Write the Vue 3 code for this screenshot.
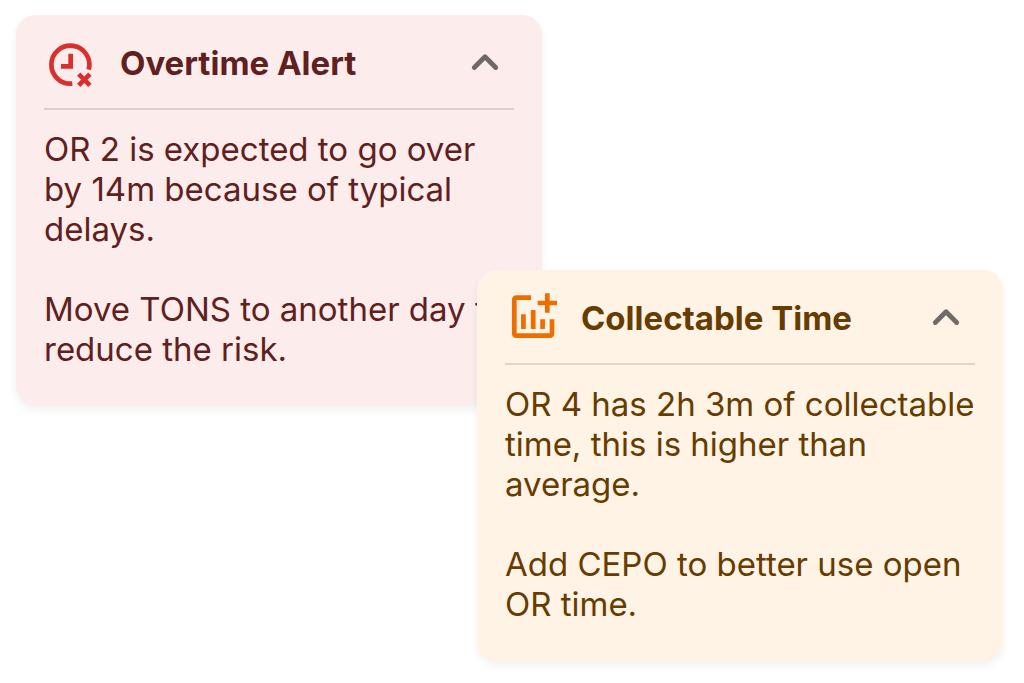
<script setup>
import { reactive } from 'vue'

const cards = reactive([
  {
    id: 'overtime',
    title: 'Overtime Alert',
    open: true,
    paragraphs: [
      'OR 2 is expected to go over by 14m because of typical delays.',
      'Move TONS to another day to reduce the risk.',
    ],
  },
  {
    id: 'collectable',
    title: 'Collectable Time',
    open: true,
    paragraphs: [
      'OR 4 has 2h 3m of collectable time, this is higher than average.',
      'Add CEPO to better use open OR time.',
    ],
  },
])

const toggle = (card) => {
  card.open = !card.open
}
</script>

<template>
  <main class="board">
    <article v-for="card in cards" :key="card.id" class="card" :class="card.id">
      <header class="card-top">
        <svg v-if="card.id === 'overtime'" class="icon" viewBox="0 0 54 54" aria-hidden="true">
          <path d="M44.7 32.7A19 19 0 1 0 28.3 46.6" class="line" />
          <path d="M24.3 16.7h4.7v15H17v-4.7h7.3z" class="solid" />
          <path d="M34.7 37.1l11.2 11.2M45.9 37.1L34.7 48.3" class="line" />
        </svg>
        <svg v-else class="icon" viewBox="0 0 54 54" aria-hidden="true">
          <path d="M26 5.6H11.3a2 2 0 0 0-2 2v34.1a2 2 0 0 0 2 2H45a2 2 0 0 0 2-2V27.3" class="line" />
          <path d="M32.7 11H52M42.3 1.2v19.5" class="line" />
          <path d="M18.4 22.3V37M28.2 18v19M37.6 27.3V37" class="line" />
        </svg>

        <h2>{{ card.title }}</h2>

        <button
          type="button"
          class="toggle"
          :aria-label="card.title"
          :aria-expanded="card.open"
          @click="toggle(card)"
        >
          <svg class="chevron" :class="{ closed: !card.open }" viewBox="0 0 32 32" aria-hidden="true">
            <path d="M5.3 19.5L16 8.8l10.7 10.7" />
          </svg>
        </button>
      </header>

      <div v-if="card.open" class="card-body">
        <p v-for="text in card.paragraphs" :key="text">{{ text }}</p>
      </div>
    </article>
  </main>
</template>

<style>
body {
  margin: 0;
  background: #ffffff;
}
</style>

<style scoped>
/* both cards share one grid cell, the second one is shifted down and right */
.board {
  display: grid;
  grid-template-columns: 1fr;
  align-items: start;
  padding: 15px 21px 22px 16px;
  font-family: Inter, 'Liberation Sans', sans-serif;
}

.card {
  grid-area: 1 / 1;
  box-sizing: border-box;
  width: 53.3%;
  padding: 22px 28px 37px;
  border-radius: 20px;
  box-shadow: 0 4px 8px rgba(0, 0, 0, 0.06);
}

.overtime {
  background: #fdecec;
  color: #5f2120;
}

.collectable {
  justify-self: end;
  margin-top: 255px;
  background: #fff3e5;
  color: #663c00;
}

.card-top {
  display: flex;
  align-items: center;
  gap: 22px;
  padding-bottom: 17px;
  padding-right: 13px;
  border-bottom: 2px solid rgba(0, 0, 0, 0.12);
}

.icon {
  flex: none;
  width: 54px;
  height: 54px;
}

.line {
  fill: none;
  stroke: currentColor;
  stroke-width: 4.7;
}

.solid {
  fill: currentColor;
}

.overtime .icon {
  color: #d92f2f;
}

.collectable .icon {
  color: #ef6c00;
}

h2 {
  flex: 1;
  margin: 0;
  padding-bottom: 2px;
  font-size: 33px;
  font-weight: 700;
  line-height: 40px;
}

.toggle {
  flex: none;
  width: 32px;
  height: 32px;
  padding: 0;
  border: 0;
  background: transparent;
  color: rgba(0, 0, 0, 0.56);
  cursor: pointer;
}

.chevron {
  display: block;
  width: 32px;
  height: 32px;
  fill: none;
  stroke: currentColor;
  stroke-width: 4.8;
  stroke-linecap: round;
  stroke-linejoin: round;
}

.chevron.closed {
  transform: rotate(180deg);
}

.card-body {
  margin-top: 19px;
  font-size: 33px;
  line-height: 40px;
}

.card-body p {
  margin: 0;
}

.card-body p + p {
  margin-top: 40px;
}
</style>
